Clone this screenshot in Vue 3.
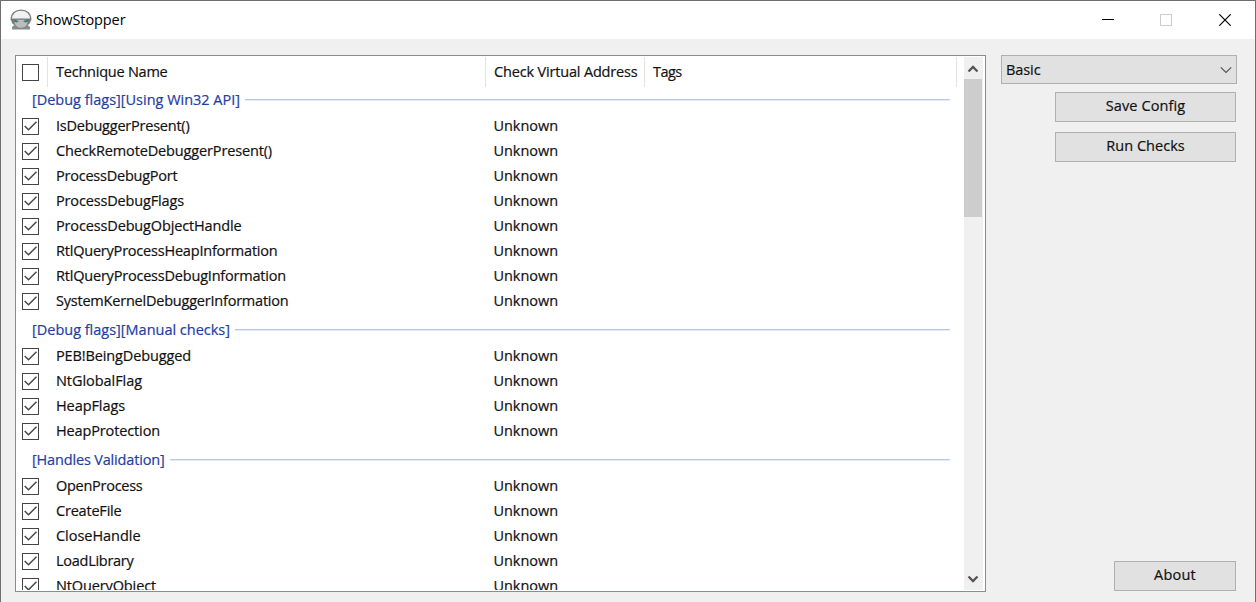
<script setup>
const groups = [
  {
    title: '[Debug flags][Using Win32 API]',
    width: 208,
    items: [
      ['IsDebuggerPresent()', 133.5],
      ['CheckRemoteDebuggerPresent()', 216],
      ['ProcessDebugPort', 121.5],
      ['ProcessDebugFlags', 128],
      ['ProcessDebugObjectHandle', 185.5],
      ['RtlQueryProcessHeapInformation', 221.5],
      ['RtlQueryProcessDebugInformation', 230],
      ['SystemKernelDebuggerInformation', 232.5],
    ],
  },
  {
    title: '[Debug flags][Manual checks]',
    width: 198,
    items: [
      ['PEB!BeingDebugged', 135],
      ['NtGlobalFlag', 86],
      ['HeapFlags', 69],
      ['HeapProtection', 104],
    ],
  },
  {
    title: '[Handles Validation]',
    width: 132.5,
    items: [
      ['OpenProcess', 86.5],
      ['CreateFile', 65.5],
      ['CloseHandle', 84.5],
      ['LoadLibrary', 77.5],
      ['NtQueryObject', 100],
    ],
  },
]

// Tracks a label so that it fills the given width in pixels.
const vFit = {
  mounted(el, { value }) {
    const natural = el.getBoundingClientRect().width
    el.style.letterSpacing = (value - natural) / el.textContent.length + 'px'
  },
}
</script>

<template>
  <div class="window">
    <header class="titlebar">
      <svg class="logo" width="22" height="22" viewBox="0 0 22 22">
        <path d="M4.500 16l-2.500 2v2.500h18V18l-2.500-2z" fill="#8a8a8a" />
        <path d="M1.200 10.500C1.200 4.500 5.500 1.200 11 1.200s9.800 3.300 9.800 9.300z" fill="#f1f1f1" stroke="#7c7c7c" stroke-width="1.300" />
        <path d="M1.200 9.800h19.600c.2 2.700-1 5.200-3 6.200H4.200c-2-1-3.200-3.500-3-6.200z" fill="#777" />
        <path d="M3.800 12C5 9.600 17 9.600 18.200 12c-.2 4.500-3.600 7.300-7.200 7.300S4 16.500 3.800 12z" fill="#bcbcbc" stroke="#777" stroke-width=".8" />
        <path d="M4 10.800l5 1.200-2.500 1.500-2.500-.9zM18 10.800l-5 1.200 2.500 1.500 2.500-.9z" fill="#2b7f6d" />
      </svg>
      <span class="title"><span v-fit="89.500">ShowStopper</span></span>
      <div class="controls">
        <svg width="12" height="12" viewBox="0 0 12 12" shape-rendering="crispEdges"><path d="M0 5.500h12" stroke="#000" /></svg>
        <svg width="12" height="12" viewBox="0 0 12 12"><path d="M.5.5h11v11H.5z" fill="none" stroke="#ccc" /></svg>
        <svg width="12" height="12" viewBox="0 0 12 12"><path d="M.3.300l11.400 11.400M11.700.300L.300 11.700" stroke="#000" stroke-width="1.200" /></svg>
      </div>
    </header>

    <main class="body">
      <section class="list">
        <div class="content">
          <div class="columns">
            <div class="cell check"><span class="box"></span></div>
            <div class="cell name"><span v-fit="111.500">Technique Name</span></div>
            <div class="cell address"><span v-fit="143.500">Check Virtual Address</span></div>
            <div class="cell tags"><span v-fit="28.500">Tags</span></div>
          </div>
          <template v-for="g in groups" :key="g.title">
            <div class="group"><span v-fit="g.width">{{ g.title }}</span><i></i></div>
            <div v-for="[label, width] in g.items" :key="label" class="row">
              <span class="box">
                <svg width="15" height="15" viewBox="0 0 15 15"><path d="M1.700 7l3.800 3.800 8-8" fill="none" stroke="#484848" stroke-width="1.500" /></svg>
              </span>
              <div class="label"><span v-fit="width">{{ label }}</span></div>
              <div class="value"><span v-fit="64.500">Unknown</span></div>
            </div>
          </template>
        </div>
        <div class="scrollbar">
          <svg class="up" width="12" height="8" viewBox="0 0 12 8"><path d="M1.500 6.500L6 2l4.500 4.500" fill="none" stroke="#555" stroke-width="2.300" /></svg>
          <div class="thumb"></div>
          <svg class="down" width="12" height="8" viewBox="0 0 12 8"><path d="M1.500 1.500L6 6l4.500-4.500" fill="none" stroke="#555" stroke-width="2.300" /></svg>
        </div>
      </section>

      <aside class="side">
        <div class="select">
          <span v-fit="34.500">Basic</span>
          <svg width="12" height="8" viewBox="0 0 12 8"><path d="M.8 1.300L6 6.500l5.200-5.200" fill="none" stroke="#555" stroke-width="1.200" /></svg>
        </div>
        <div class="button"><span v-fit="79.500">Save Config</span></div>
        <div class="button second"><span v-fit="78.500">Run Checks</span></div>
        <div class="button about"><span v-fit="42">About</span></div>
      </aside>
    </main>
  </div>
</template>

<style>
body {
  margin: 0;
  overflow: hidden;
}
</style>

<style scoped>
.window {
  box-sizing: border-box;
  width: 1256px;
  height: 602px;
  border: 1px solid #6f6f6f;
  border-bottom: 0;
  background: #f0f0f0;
  display: flex;
  flex-direction: column;
  font: 14.5px/20px "Open Sans", "Noto Sans", sans-serif;
  color: #111;
  -webkit-text-stroke: 0.2px currentColor;
  white-space: nowrap;
}
.titlebar {
  height: 38px;
  background: #fff;
  display: flex;
  align-items: center;
  padding-left: 9px;
}
.logo {
  margin-top: -1px;
}
.title {
  margin: -1px 0 0 4px;
  color: #000;
  -webkit-text-stroke: 0;
}
.controls {
  margin-left: auto;
  display: flex;
  gap: 47px;
  padding-right: 24px;
}
.controls svg {
  display: block;
}
.controls svg:first-child {
  margin-right: -1px;
}
.body {
  flex: 1;
  display: flex;
  gap: 15px;
  padding: 16px 18px 10px 14px;
  min-height: 0;
}
.list {
  box-sizing: border-box;
  width: 971px;
  height: 537px;
  border: 1px solid #888c94;
  background: #fff;
  display: flex;
  padding: 1px 2px 1px 1px;
}
.content {
  flex: 1;
  overflow: hidden;
}
.columns {
  height: 27px;
  display: flex;
}
.cell {
  box-sizing: border-box;
  height: 30px;
  border-right: 1px solid #e3e3e3;
  display: flex;
  align-items: center;
  padding-left: 8px;
}
.check {
  width: 31px;
  padding-left: 5px;
}
.name {
  width: 438px;
}
.address {
  width: 159px;
}
.tags {
  width: 312px;
}
.group {
  height: 30px;
  display: flex;
  align-items: center;
  gap: 5px;
  padding: 2px 14px 0 15px;
  box-sizing: border-box;
  color: #1e40a4;
}
.group i {
  flex: 1;
  height: 1px;
  margin-top: -1px;
  background: #b9c7e4;
  box-shadow: 0 1px #e3e9f6;
}
.row {
  height: 25px;
  display: flex;
  align-items: center;
}
.row .box {
  margin-left: 5px;
}
.box {
  box-sizing: border-box;
  width: 17px;
  height: 17px;
  border: 1px solid #444;
  background: #fff;
  flex: none;
}
.row .label,
.row .value {
  padding-bottom: 1px;
}
.box svg {
  display: block;
}
.label {
  width: 421px;
  padding-left: 17px;
  flex: none;
}
.scrollbar {
  width: 19px;
  background: #f0f0f0;
  display: flex;
  flex-direction: column;
  align-items: flex-start;
}
.up {
  margin: 8px 0 6px 3px;
}
.thumb {
  width: 18px;
  height: 138px;
  background: #cdcdcd;
}
.down {
  margin: auto 0 7px 3px;
}
.value {
  margin-left: 16.5px;
}
.side {
  flex: 1;
  display: flex;
  flex-direction: column;
  align-items: flex-end;
  height: 536px;
}
.select {
  box-sizing: border-box;
  width: 236px;
  height: 29px;
  border: 1px solid #b0b0b0;
  background: #e1e1e1;
  display: flex;
  align-items: center;
  justify-content: space-between;
  padding: 0 4px;
}
.button {
  box-sizing: border-box;
  width: 181px;
  height: 30px;
  margin: 8px 1px 0 0;
  border: 1px solid #b0b0b0;
  background: #e1e1e1;
  display: flex;
  align-items: center;
  justify-content: center;
  padding-bottom: 2px;
}
.second {
  margin-top: 10px;
}
.about {
  width: 122px;
  margin-top: auto;
}
</style>
